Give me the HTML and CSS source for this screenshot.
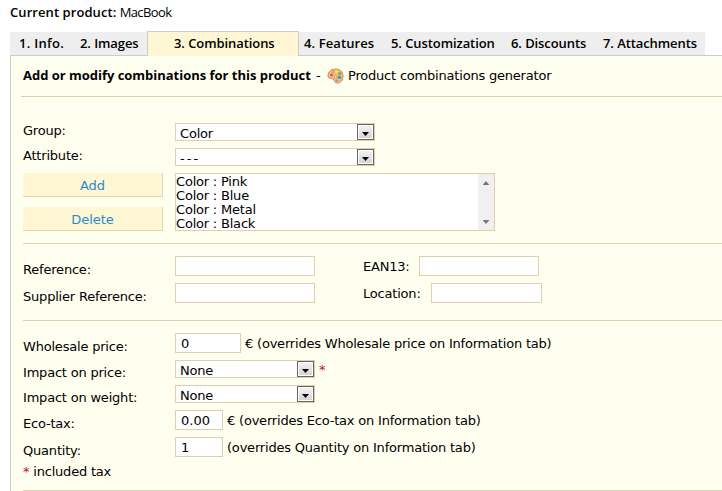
FILE: index.html
```html
<!DOCTYPE html>
<html lang="en">
<head>
<meta charset="utf-8">
<title>Product combinations</title>
<link rel="stylesheet" href="styles.css">
</head>
<body>
<div class="current"><b>Current product:</b> <span>MacBook</span></div>
<nav class="tabs">
  <div class="tab t1"><span>1. Info.</span></div>
  <div class="tab t2"><span>2. Images</span></div>
  <div class="tab t3 active"><span>3. Combinations</span></div>
  <div class="tab t4"><span>4. Features</span></div>
  <div class="tab t5"><span>5. Customization</span></div>
  <div class="tab t6"><span>6. Discounts</span></div>
  <div class="tab t7"><span>7. Attachments</span></div>
</nav>
<main class="panel">
  <div class="heading">
    <b>Add or modify combinations for this product</b><span class="dash">-</span>
    <svg class="palette" width="17" height="16" viewBox="0 0 17 16">
      <path d="M1 8C1 3 5 1 9 1c4 0 7 3 7 7 0 4-2 7-6 7-3 0-2-3-4-4-2-1-5 0-5-3z" fill="#f0bd88" stroke="#c98a5c"/>
      <circle cx="4.5" cy="7" r="1.5" fill="#ee5a3c"/>
      <circle cx="6" cy="3.9" r="1.4" fill="#f29a3a"/>
      <circle cx="9.5" cy="3.6" r="1.7" fill="#ffe02e"/>
      <circle cx="12.7" cy="5.7" r="1.6" fill="#67b544"/>
      <circle cx="12.5" cy="9.4" r="1.7" fill="#3d9ad0"/>
      <circle cx="8.8" cy="9" r="1.4" fill="#fff5df" stroke="#b97d55" stroke-width=".8"/>
      <circle cx="10" cy="12.6" r="1.2" fill="#d98b65"/>
    </svg>
    <span>Product combinations generator</span>
  </div>
  <hr class="wide">
  <section class="attributes">
    <div class="row select-row"><label>Group:</label><div class="select large"><span>Color</span><i></i></div></div>
    <div class="row select-row"><label>Attribute:</label><div class="select large"><span class="dashes">---</span><i></i></div></div>
    <div class="picker">
      <div class="buttons"><button>Add</button><button>Delete</button></div>
      <div class="list">
        <div class="options"><div>Color : Pink</div><div>Color : Blue</div><div>Color : Metal</div><div>Color : Black</div></div>
        <div class="scroll"><i class="up"></i><i class="down"></i></div>
      </div>
    </div>
  </section>
  <hr>
  <section class="references">
    <div class="row input-row"><label>Reference:</label><input class="w140"><span class="side ean">EAN13:</span><input class="w120"></div>
    <div class="row input-row"><label>Supplier Reference:</label><input class="w140"><span class="side loc">Location:</span><input class="w111"></div>
  </section>
  <hr>
  <section class="prices">
    <div class="row input-row"><label>Wholesale price:</label><input class="w66" value="0"><span class="note">€ (overrides Wholesale price on Information tab)</span></div>
    <div class="row select-row low"><label>Impact on price:</label><div class="select small"><span>None</span><i></i></div><span class="star">*</span></div>
    <div class="row select-row low"><label>Impact on weight:</label><div class="select small"><span>None</span><i></i></div></div>
    <div class="row input-row"><label>Eco-tax:</label><input class="w48" value="0.00"><span class="note">€ (overrides Eco-tax on Information tab)</span></div>
    <div class="row input-row"><label>Quantity:</label><input class="w48" value="1"><span class="note">(overrides Quantity on Information tab)</span></div>
    <div class="included"><span>*</span> included tax</div>
  </section>
  <hr>
</main>
</body>
</html>
```
FILE: styles.css
```css
* { box-sizing: border-box; }
html, body { margin: 0; height: 491px; overflow: hidden; background: #fff; }
body { font: 13px/16px "DejaVu Sans", Verdana, sans-serif; color: #000; letter-spacing: -0.2px; white-space: nowrap; }
.current { height: 31px; padding: 4px 0 0 10px; font-family: "Open Sans", sans-serif; letter-spacing: 0; }
.current b { font-weight: 600; letter-spacing: 0.07px; }
.current span { letter-spacing: -0.6px; }
.tabs { display: flex; align-items: flex-end; height: 24px; margin-left: 10px; font: 600 13px/22px "Open Sans", sans-serif; letter-spacing: -0.08px; }
.tab { height: 23px; background: #eee; }
.t1 { width: 62px; padding-left: 9px; letter-spacing: 0.3px; }
.t2 { width: 75px; padding-left: 8px; }
.t3 { width: 152px; padding-left: 26px; }
.t4 { width: 85px; padding-left: 5px; letter-spacing: 0.1px; }
.t5 { width: 120px; padding-left: 7px; }
.t6 { width: 92px; padding-left: 7px; }
.t7 { width: 109px; padding-left: 7px; }
.tab.active { position: relative; height: 25px; margin-bottom: -1px; background: #fff6d3; border: 1px solid #ccc; border-bottom: 0; }
.panel { height: 436px; margin-left: 10px; padding-left: 12px; background: #fffff0; border: 1px solid #ccc; border-width: 1px 0 0 1px; }
.heading { display: flex; height: 40px; padding-top: 12px; }
.heading b { width: 293px; font: 700 13px/15px "Open Sans", sans-serif; letter-spacing: -0.02px; }
.dash { width: 11px; }
.palette { width: 17px; height: 16px; margin-right: 4px; }
hr { height: 1px; margin: 0; border: 0; background: #dfcfad; }
hr.wide { margin-left: -2px; }
.row { display: flex; }
label { width: 152px; }
.attributes { height: 146px; padding-top: 26px; }
.select-row { height: 25px; }
.low label { padding-top: 5px; }
.select { display: flex; justify-content: space-between; height: 18px; background: #fff; border: 1px solid #e0ceac; padding-left: 4px; line-height: 20px; }
.dashes { letter-spacing: 2px; }
.large { width: 200px; }
.small { width: 140px; }
.select i { width: 17px; height: 16px; border: 1px solid #666; background: linear-gradient(#f5f5f5, #d2d2d2); box-shadow: inset 0 0 0 1px #fff; padding: 7px 0 0 4px; }
.select i::before { content: ""; display: block; width: 7px; height: 4px; background: #000; clip-path: polygon(0 0, 100% 0, 50% 100%); }
.picker { display: flex; gap: 12px; }
.buttons { display: grid; gap: 10px; }
button { width: 140px; height: 24px; padding: 2px 0 0; border: 1px solid #dfd5af; border-width: 0 1px 1px 0; background: #fff6d3; color: #268ccd; font: inherit; letter-spacing: 0; }
.list { display: flex; width: 320px; height: 58px; border: 1px solid #e0ceac; background: #fff; }
.options { flex: 1; line-height: 14px; padding: 1px 0 0; overflow: hidden; }
.scroll { display: flex; flex-direction: column; justify-content: space-between; align-items: center; width: 16px; padding: 7px 0 6px; background: #f0f0f0; }
.scroll i { width: 7px; height: 4px; background: #777; }
.up { clip-path: polygon(50% 0, 100% 100%, 0 100%); }
.down { clip-path: polygon(0 0, 100% 0, 50% 100%); }
.references { height: 76px; padding-top: 12px; }
.input-row { height: 27px; }
.input-row label { padding-top: 6px; }
input { height: 20px; margin: 0; padding: 0 5px; border: 1px solid #e0ceac; background: #fff; color: #000; font: inherit; letter-spacing: 0; outline: 0; border-radius: 0; }
.w140 { width: 140px; } .w120 { width: 120px; } .w111 { width: 111px; } .w66 { width: 66px; } .w48 { width: 48px; }
.side { margin-left: 48px; padding-top: 3px; }
.ean { width: 56px; } .loc { width: 68px; }
.note { padding: 3px 0 0 4px; }
.prices { height: 169px; padding-top: 12px; }
.star { margin-left: 4px; padding-top: 2px; color: #d10033; }
.included { padding-top: 0; }
.included span { color: #d10033; }
```
